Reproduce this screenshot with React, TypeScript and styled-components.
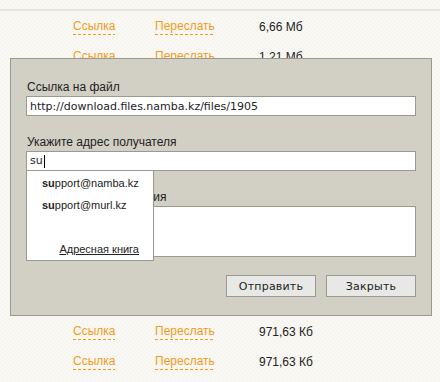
import React from 'react'
import styled, { createGlobalStyle } from 'styled-components'

const GlobalStyle = createGlobalStyle`
  html, body {
    margin: 0;
    padding: 0;
  }
  body {
    width: 440px;
    height: 382px;
    overflow: hidden;
    background-color: #f8f7f3;
    background-image: repeating-conic-gradient(#f6f5f0 0 25%, #f9f8f4 0 50%);
    background-size: 4px 4px;
    font-family: 'Liberation Sans', Arial, sans-serif;
  }
`

const Page = styled.div`
  position: relative;
  width: 440px;
  height: 382px;
`

const TopRule = styled.div`
  height: 9px;
  border-bottom: 2px solid #e8e6da;
`

const FileList = styled.div`
  padding-top: 1px;
`

const Row = styled.div<{ $tall?: boolean }>`
  display: grid;
  grid-template-columns: 82px 104px auto;
  align-items: center;
  height: ${(p) => (p.$tall ? 35 : 30)}px;
  padding-left: 73px;
  font-size: 12px;
  color: #222;
`

const DashLink = styled.span`
  justify-self: start;
  color: #f39c1a;
  line-height: 15px;
  padding-bottom: 1px;
  background-image: repeating-linear-gradient(
    to right,
    #f39c1a 0 3px,
    transparent 3px 5px
  );
  background-repeat: no-repeat;
  background-size: 100% 1px;
  background-position: 0 100%;
  cursor: pointer;
`

const Size = styled.span``

const Dialog = styled.div`
  position: absolute;
  left: 10px;
  top: 58px;
  width: 390px;
  padding: 21px 15px 18px;
  background: #d2d0c4;
  border: 1px solid #9b9a8f;
`

const Group = styled.div`
  position: relative;
  & + & {
    margin-top: 19px;
  }
`

const Label = styled.div`
  font-size: 12px;
  line-height: 14px;
  color: #222;
  margin: 0 0 2px 1px;
`

const fieldBase = `
  display: block;
  box-sizing: border-box;
  width: 390px;
  margin: 0;
  border: 1px solid #9b9a8f;
  background: #fff;
  font-family: 'DejaVu Sans', sans-serif;
  font-size: 11px;
  color: #222;
  outline: none;
`

const TextInput = styled.input`
  ${fieldBase}
  height: 20px;
  padding: 0 3px;
`

const TypedInput = styled.div`
  ${fieldBase}
  height: 20px;
  padding: 0 3px;
  line-height: 18px;
  display: flex;
  align-items: center;
`

const Caret = styled.span`
  display: inline-block;
  width: 1px;
  height: 13px;
  margin-left: 1px;
  background: #000;
`

const MessageArea = styled.textarea`
  ${fieldBase}
  height: 51px;
  padding: 2px 3px;
  resize: none;
`

const Suggest = styled.div`
  position: absolute;
  left: 0;
  top: 36px;
  z-index: 2;
  box-sizing: border-box;
  width: 128px;
  height: 90px;
  padding: 5px 14px 4px 15px;
  background: #fff;
  border: 1px solid #9b9a8f;
  border-top: none;
  display: flex;
  flex-direction: column;
  font-size: 11px;
  color: #222;
`

const SuggestItem = styled.div`
  height: 22px;
  line-height: 14px;

  b {
    font-weight: bold;
  }
`

const AddressBook = styled.a`
  margin-top: auto;
  align-self: flex-end;
  color: #222;
  text-decoration: underline;
  line-height: 14px;
`

const Buttons = styled.div`
  display: flex;
  justify-content: flex-end;
  gap: 10px;
  margin-top: 18px;
`

const Button = styled.button`
  width: 90px;
  height: 22px;
  padding: 0;
  background: #e8e8e6;
  border: 1px solid #9b9a8f;
  border-radius: 0;
  font-family: 'DejaVu Sans', sans-serif;
  font-size: 11px;
  color: #222;
  letter-spacing: 0.2px;
`

const rows = [
  { size: '6,66 Мб' },
  { size: '1,21 Мб' },
  { size: '3,48 Мб' },
  { size: '812,40 Кб' },
  { size: '2,05 Мб', tall: true },
  { size: '1,77 Мб' },
  { size: '640,12 Кб' },
  { size: '4,90 Мб' },
  { size: '1,02 Мб' },
  { size: '971,63 Кб' },
  { size: '971,63 Кб' },
  { size: '971,63 Кб' },
]

export default function App() {
  return (
    <Page>
      <GlobalStyle />
      <TopRule />
      <FileList>
        {rows.map((row, i) => (
          <Row key={i} $tall={row.tall}>
            <DashLink>Ссылка</DashLink>
            <DashLink>Переслать</DashLink>
            <Size>{row.size}</Size>
          </Row>
        ))}
      </FileList>

      <Dialog>
        <Group>
          <Label>Ссылка на файл</Label>
          <TextInput
            readOnly
            value="http://download.files.namba.kz/files/1905"
          />
        </Group>
        <Group>
          <Label>Укажите адрес получателя</Label>
          <TypedInput>
            su
            <Caret />
          </TypedInput>
          <Suggest>
            <SuggestItem>
              <b>su</b>pport@namba.kz
            </SuggestItem>
            <SuggestItem>
              <b>su</b>pport@murl.kz
            </SuggestItem>
            <AddressBook>Адресная книга</AddressBook>
          </Suggest>
        </Group>
        <Group>
          <Label>Текст вашего сообщения</Label>
          <MessageArea />
        </Group>
        <Buttons>
          <Button>Отправить</Button>
          <Button>Закрыть</Button>
        </Buttons>
      </Dialog>
    </Page>
  )
}
